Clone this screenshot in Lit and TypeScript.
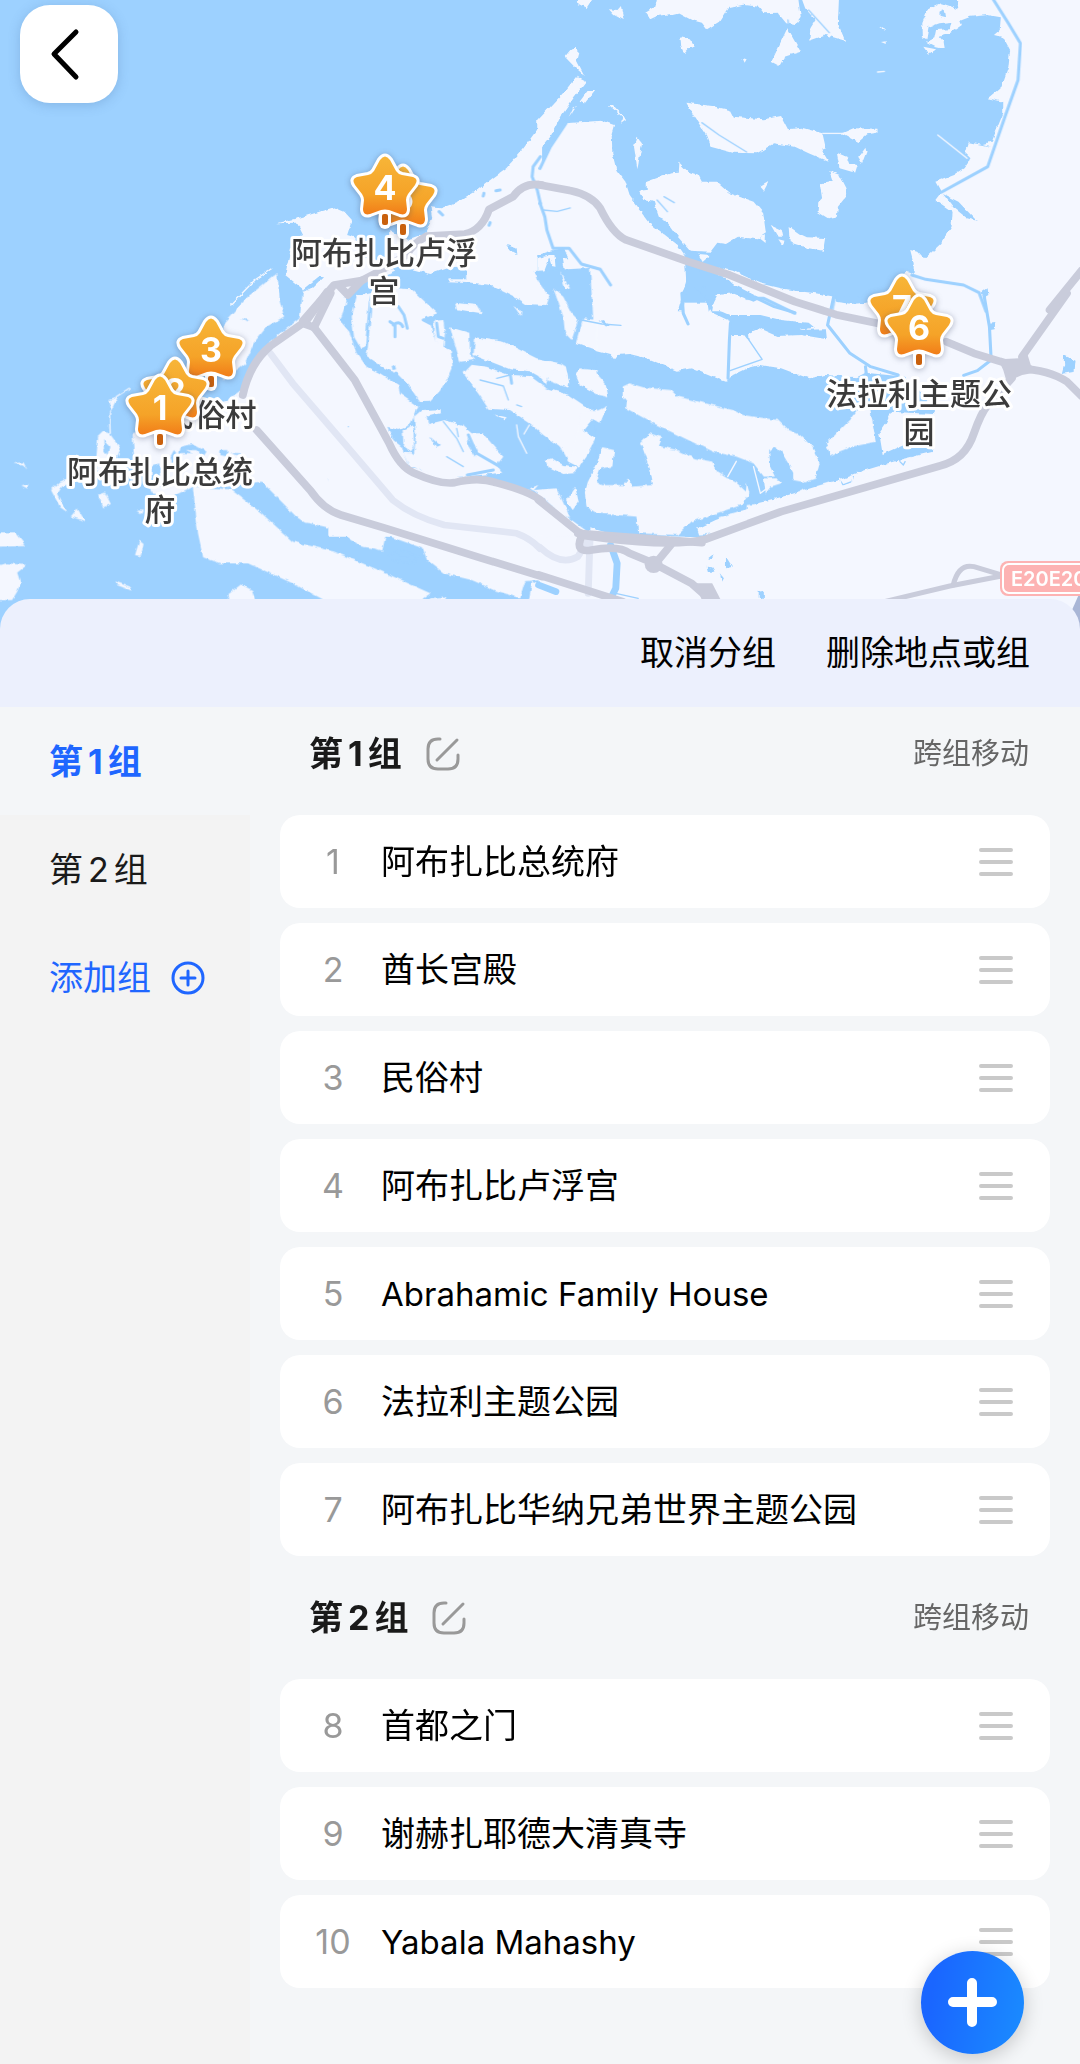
import { LitElement, html, svg, css } from "lit";
import { customElement, property, state } from "lit/decorators.js";

interface Place {
  id: number;
  name: string;
}

interface Group {
  index: number;
  places: Place[];
}

interface Pin {
  n: number;
  x: number;
  y: number;
}

interface PinLabel {
  x: number;
  y: number;
  lines: string[];
}

const GROUPS: Group[] = [
  {
    index: 1,
    places: [
      { id: 1, name: "阿布扎比总统府" },
      { id: 2, name: "酋长宫殿" },
      { id: 3, name: "民俗村" },
      { id: 4, name: "阿布扎比卢浮宫" },
      { id: 5, name: "Abrahamic Family House" },
      { id: 6, name: "法拉利主题公园" },
      { id: 7, name: "阿布扎比华纳兄弟世界主题公园" },
    ],
  },
  {
    index: 2,
    places: [
      { id: 8, name: "首都之门" },
      { id: 9, name: "谢赫扎耶德大清真寺" },
      { id: 10, name: "Yabala Mahashy" },
    ],
  },
];

const PINS: Pin[] = [
  { n: 5, x: 403, y: 197 },
  { n: 4, x: 385, y: 187 },
  { n: 3, x: 211, y: 349 },
  { n: 2, x: 175, y: 390 },
  { n: 1, x: 160, y: 407 },
  { n: 7, x: 902, y: 307 },
  { n: 6, x: 919, y: 327 },
];

const LABELS: PinLabel[] = [
  { x: 210, y: 426, lines: ["民俗村"] },
  { x: 384, y: 264, lines: ["阿布扎比卢浮", "宫"] },
  { x: 160, y: 483, lines: ["阿布扎比总统", "府"] },
  { x: 919, y: 405, lines: ["法拉利主题公", "园"] },
];

/* The map is drawn in tiles; each tile has its own drawing units. */
const NW_LAND = [
  "1574,370 1548,405 1520,445 1470,505 1430,535 1380,575 1330,605 1280,625 1250,622 1255,655 1235,700 1180,720 1130,690 1130,790 1250,822 1300,805 1355,790 1355,842 1305,842 1352,850 1380,865 1450,890 1530,905 1560,880 1574,770",
  "805,670 880,650 970,622 1000,635 1022,660 1008,705 1030,712 1050,770 1120,785 1150,815 1100,835 1050,860 1000,930 880,930 930,875 900,892 888,882 938,832 925,830 880,868 828,825 850,720 880,705 862,668",
];
const NE_LAND = [
  "110,0 150,0 135,24 112,12", "200,28 225,30 235,18 243,60 215,45",
  "340,-4 750,-4 757,50 740,75 715,70 690,38 650,40 635,20 590,14 545,25 520,65 485,88 470,68 440,60 400,38 385,42 340,48 320,58 306,38 335,20",
  "760,-4 868,-4 865,70 886,122 830,105 782,122 785,85 800,60 770,25",
  "718,85 757,155 710,170 695,198 672,185",
  "408,112 435,118 449,140 430,145 418,160 410,140", "72,170 88,150 100,140 112,155 106,180 130,228 98,198",
  "105,230 134,245 100,290 60,350 30,410 -8,460 -8,362 40,310 75,270",
  "115,305 140,270 160,270 130,310", "83,352 95,325 105,318",
  "200,315 212,315 250,358 235,368 240,352", "280,410 296,430 283,508 273,440",
  "75,370 180,362 215,375 208,400 210,460 222,510 248,545 262,590 320,670 400,735 420,765 425,850 410,880 412,934 -8,934 -8,515 30,440",
  "425,308 500,318 550,330 560,350 650,358 700,348 720,388 760,383 820,400 830,445 818,450 838,485 780,460 740,440 680,430 630,460 560,458 495,440 480,400 445,345",
  "876,400 910,385 980,386 980,398 950,403 925,426", "945,440 948,455 935,490 924,470",
  "862,458 890,470 898,492 922,495 915,518 870,505", "840,513 870,525 890,565 888,590 865,620 862,650 836,655 806,635 808,610 822,595 815,550 850,542",
  "405,488 430,515 460,525 470,545 512,545 550,580 620,605 648,640 656,700 630,718 575,710 540,732 515,728 495,755 435,752 400,710 365,660 345,650 330,605 300,600 288,572 310,570 310,545 350,530 380,520 403,518",
  "640,560 664,545 650,572", "670,675 702,690 706,710 690,710", "692,718 710,722 704,736", "722,678 755,702 775,712 828,714 822,752 780,745 725,727", "636,710 656,706 655,726", "460,762 495,765 472,786",
  "985,82 998,78 1005,90", "990,126 1004,124 1004,132", "588,174 600,178 594,188",
  "1574,-4 1210,-4 1215,28 1190,18 1165,10 1125,30 1110,70 1112,112 1122,118 1128,82 1160,70 1195,66 1190,88 1150,90 1145,115 1125,125 1115,122 1145,138 1175,145 1172,125 1158,108 1192,98 1225,75 1220,62 1250,50 1300,45 1338,52 1335,90 1318,105 1345,112 1365,150 1360,200 1340,260 1300,295 1345,305 1345,340 1325,390 1312,425 1285,432 1310,440 1245,427 1235,460 1250,475 1230,505 1200,525 1148,545 1165,577 1148,600 1198,635 1195,680 1165,730 1115,778 1095,755 1075,750 1085,790 1085,820 1062,812 1030,880 960,905 920,915 860,905 855,890 800,880 740,872 700,865 640,850 560,812 520,803 500,934 1574,934",
  "1113,140 1150,148 1130,164",
];
const NE_WATER = [
  "425,800 540,832 560,852 640,895 620,905 560,880 515,885 500,915 490,935 480,858 462,872 430,850 415,934 400,934 424,845",
  "-8,765 30,752 70,745 100,820 118,860 130,934 -8,934",
  "1170,582 1215,605 1268,662 1240,655 1200,622",
  "1280,880 1300,865 1302,888 1290,895", "1160,35 1172,28 1176,55 1160,50",
];
const NE_ISLETS = ["-8,775 30,765 10,820 -8,840", "66,775 95,775 130,820 120,850 150,934 120,934 100,850 72,810", "55,815 70,840 90,934 70,934 45,870", "24,765 42,765 45,800 34,798"];
const SW_LAND = [
  "655,65 720,-10 805,-80 812,0 825,50 775,80 740,125 712,190 650,240 620,190",
  "880,-30 1000,-30 1010,30 988,55 1025,110 1045,185 1120,235 1212,310 1178,350 1208,372 1170,390 1125,400 1140,430 1170,490 1290,535 1390,512 1455,530 1574,580 1574,840 1525,843 1510,895 1440,872 1370,840 1290,820 1240,780 1228,745 1120,705 1110,752 1085,745 1050,740 1005,708 985,690 900,670 885,668 860,650 830,618 760,545 640,560 560,560 500,590 440,580 430,540 390,480 385,400 540,350 660,300 700,270 735,190 780,130 870,55",
  "560,560 670,568 760,640 850,725 970,755 1100,810 1250,880 1215,905 950,905 850,850 720,790 640,790 590,772 575,700",
  "148,570 175,545 215,528 240,535 180,560 168,580 195,636 175,622", "285,585 305,578 322,612 300,622", "205,650 225,626 248,664", "-4,700 45,700 75,738 -4,740",
  "-4,795 20,790 78,795 50,818 60,850 50,875 35,900 -4,900", "392,765 405,722 417,732 408,768", "332,843 380,862 382,872 340,855", "660,885 700,853 732,870 742,905 670,905",
  "280,470 285,410 300,395 318,400 350,445 330,500 300,540 285,530", "318,300 342,292 322,328", "38,490 68,487 80,510 70,498", "62,556 82,552 80,566",
  "1545,845 1574,855 1574,905 1535,905", "1250,895 1290,890 1300,905 1240,905", "395,632 418,632 412,642",
];
const SW_WATER = [
  "525,440 560,432 600,455 590,470 570,450 540,450 560,462 520,462", "640,450 660,450 660,470 640,465", "665,458 700,460 690,465", "505,450 520,470 500,490 495,470", "952,535 975,550 965,558", "700,55 725,62 715,66",
  "440,500 465,490 470,560 440,550", "300,420 318,440 312,465 302,450",
];
const MID_WATER = "100,30 780,-6 800,300 790,420 800,600 780,790 600,660 440,625 340,630 235,590 130,410 0,220 30,90";
const MID_LAND = [
  "-5,80 50,82 48,100 30,152 58,185 78,245 110,290 150,310 205,345 210,372 265,410 240,465 205,480 172,470 190,510 215,530 235,590 280,600 350,625 440,620 600,668 700,735 780,795 600,800 -5,800",
  "122,70 80,78 65,140 72,200 92,235 105,230 116,100",
  "128,60 200,55 245,58 322,130 275,148 300,160 310,195 330,225 362,240 368,290 355,320 330,362 300,395 270,396 235,345 200,310 165,295 110,258 117,200",
  "312,152 340,150 345,190 340,235 328,230 310,190",
  "360,172 418,188 420,250 435,270 390,275",
  "436,202 520,215 560,235 620,265 690,280 712,310 716,352 690,345 655,322 648,345 625,318 600,304 540,298 430,255",
  "400,310 425,284 470,290 535,314 600,318 650,355 715,374 798,430 760,480 798,505 748,592 715,575 690,530 640,495 600,460 540,420 475,416 450,378",
  "645,570 665,565 700,585 742,590 732,610 700,612 655,590",
  "252,440 275,420 330,418 330,430 290,440 295,462 345,450 400,468 425,490 458,490 520,560 500,585 518,608 440,616 350,628 275,600 250,570 258,500",
  "218,480 250,466 252,530 240,548 220,520", "220,548 245,550 272,575 270,600 235,585",
  "375,98 440,105 455,130 380,118", "550,108 575,122 572,138 560,120",
  "410,-6 608,-6 625,35 658,80 650,105 585,102 560,85 480,45 410,36 355,34 356,28 408,28",
  "670,55 700,80 725,130 745,150 725,210 705,190 700,140", "690,5 720,55 708,60",
  "760,145 800,150 800,240 738,218", "745,300 800,300 800,370 750,345",
  "490,433 530,442 525,448", "600,655 625,645 610,662", "610,660 680,655 720,742 700,735",
];
const MID_LAKES = ["185,288 195,285 198,298 188,300", "300,500 330,525 318,530", "415,500 440,540 435,560 410,520"];
const SE_WATER = [
  "-8,-30 50,-30 60,35 78,60 88,115 95,120 105,100 110,50 122,60 108,105 115,128 150,150 205,165 215,178 225,165 260,162 310,175 345,190 400,212 440,205 500,230 540,245 560,225 600,205 640,195 700,205 780,235 830,225 920,232 945,218 1060,230 1150,335 1140,342 1020,335 1005,370 985,400 995,462 1060,432 1140,442 1138,456 1050,478 930,515 870,540 800,560 700,592 640,605 600,628 560,642 510,660 460,685 500,700 470,712 280,708 200,700 160,688 120,668 75,640 65,600 45,575 -8,560",
  "462,-30 505,25 550,45 640,45 700,60 780,68 796,82 750,90 830,88 833,118 760,105 690,108 650,90 640,84 604,100 606,125 590,105 553,105 550,62 500,38",
  "858,-10 950,-6 948,8 900,12 862,6", "1305,68 1322,66 1320,88 1308,90", "1520,165 1555,182 1552,215 1515,222 1522,195", "170,62 185,60 205,80 190,78",
  "484,800 500,802 508,815 488,815", "540,770 552,790 560,800 540,805", "522,820 534,835 528,846", "488,775 504,762 498,778", "635,875 650,872 650,897 635,893",
];
const SE_LAND = [
  "75,200 85,250 80,262 20,240 60,190", "75,600 102,560 112,605 95,630",
  "120,340 170,330 195,318 175,368 152,358 125,388 154,412 135,470 112,502 90,480",
  "105,225 115,205 155,210 190,250 198,292 170,285 115,250",
  "240,260 260,250 300,262 380,270 400,290 460,305 560,330 590,345 690,360 720,390 755,405 790,440 812,490 800,535 770,547 735,540 735,515 700,455 680,440 665,450 668,500 682,530 650,530 620,490 570,470 500,455 420,415 330,370 250,325 252,305 240,290",
  "290,430 318,400 355,412 345,438 400,450 450,475 500,485 510,510 540,530 570,545 598,572 600,548 608,580 585,615 540,630 440,665 400,705 285,700 280,650 230,645 165,640 135,620 130,580 140,540 165,490 180,442 215,450 210,500 175,505 162,545 180,555 245,555 255,533 270,560 328,555 320,510 300,450",
  "830,432 900,360 920,330 958,322 975,425 900,442 842,466",
  "600,615 625,612 740,582 738,600 640,628 620,655 600,640", "518,652 590,630 595,645 525,665", "742,578 775,565 780,585 760,600", "800,560 850,545 848,565 805,580",
  "456,685 540,672 620,655 600,668 490,702 462,704", "920,522 960,512 960,520 920,530", "968,510 990,504 990,512 968,518", "1000,495 1026,486 1026,494 1000,502", "1070,485 1080,474 1106,472 1100,485",
  "650,535 690,535 700,550 670,560 655,580", "1110,475 1132,462 1150,488 1060,512 900,560 920,545",
];

const STAR =
  "M-5 -27Q0 -34 5 -27L11 -16Q13 -13 17 -12L28 -10Q34 -8 30 -2L23 7Q21 10 21 13L22 22Q22 29 15 27L4 23Q0 22 -4 23L-15 27Q-22 29 -22 22L-21 13Q-21 10 -23 7L-30 -2Q-34 -8 -28 -10L-17 -12Q-13 -13 -11 -16Z";

const rgn = (pts: string[], cls: string) => pts.map((p) => svg`<polygon class=${cls} points=${p}></polygon>`);
const lines = (paths: string[], cls: string) => paths.map((d) => svg`<path class=${cls} d=${d}></path>`);

@customElement("trip-map")
export class TripMap extends LitElement {
  static styles = css`
    :host { display: block; }
    svg { display: block; width: 100%; height: auto; background: #9dd1ff; }
    .land { fill: #f4f7ff; }
    .water { fill: #9dd1ff; }
    path { fill: none; stroke-linecap: round; stroke-linejoin: round; }
    .canal { stroke: #9dd1ff; stroke-width: 9; }
    .creek { stroke: #9dd1ff; stroke-width: 4; }
    .spit { stroke: #f4f7ff; stroke-width: 4; }
    .river { stroke: #9dd1ff; stroke-width: 20; }
    .minor { stroke: #e1e6f4; stroke-width: 20; }
    .road { stroke: #c9ccdb; stroke-width: 23; }
    .ramp { stroke: #c9ccdb; stroke-width: 15; }
    .hub { fill: #c9ccdb; }
    .dark { fill: #a9b6d6; }
    .label {
      font: 500 31px "Noto Sans CJK SC", sans-serif; fill: #3b3b3b; text-anchor: middle;
      stroke: #fff; stroke-width: 6; stroke-linejoin: round; paint-order: stroke;
    }
    .digit { font: 700 34px Inter, sans-serif; fill: #fff; text-anchor: middle; }
    .halo { fill: #fff; stroke: #fff; stroke-width: 6; }
    .star { fill: url(#gold); }
    .pin { filter: drop-shadow(0 1px 3px rgba(60, 70, 100, 0.4)); }
    .sign { fill: #fdb3b3; stroke: #fff; stroke-width: 2; }
    .sign-rim { fill: #fdb3b3; }
    .sign-text { font: 600 20px Inter, sans-serif; fill: #fff; }
  `;

  private pin(p: Pin) {
    return svg`<g class="pin" transform="translate(${p.x} ${p.y})">
      <rect x="-6" y="20" width="12" height="22" rx="6" fill="#fff"></rect>
      <path class="halo" d=${STAR}></path>
      <rect x="-3" y="27" width="6" height="11" rx="2" fill="#c9600c"></rect>
      <path class="star" d=${STAR}></path>
      <text class="digit" x="0" y="13">${p.n}</text>
    </g>`;
  }

  render() {
    return html`<svg viewBox="0 0 1080 640" role="img" aria-label="地图">
      <defs>
        <linearGradient id="gold" gradientUnits="userSpaceOnUse" x1="0" y1="-30" x2="0" y2="28">
          <stop offset="0" stop-color="#f7b538"></stop>
          <stop offset="0.65" stop-color="#f5a328"></stop>
          <stop offset="1" stop-color="#f17c18"></stop>
        </linearGradient>
        <filter id="coast" x="0" y="0" width="1080" height="640" filterUnits="userSpaceOnUse" color-interpolation-filters="sRGB">
          <feTurbulence type="fractalNoise" baseFrequency="0.16" numOctaves="2" seed="4" result="n"></feTurbulence>
          <feDisplacementMap in="SourceGraphic" in2="n" scale="4" xChannelSelector="R" yChannelSelector="G"></feDisplacementMap>
        </filter>
      </defs>

      <g filter="url(#coast)">
        <g transform="scale(.3444 .3333)">
          ${rgn(NW_LAND, "land")}
          ${lines(["M670 915L740 840L790 805"], "spit")}
          <polygon class="water" points="1470,735 1500,745 1502,765 1485,755"></polygon>
        </g>
        <g transform="translate(0 300) scale(.3444 .3333)">
          ${rgn(SW_LAND, "land")}${rgn(SW_WATER, "water")}
          ${lines(["M375 265L338 290L318 340L320 400"], "spit")}
          ${lines(["M1130 765L1165 750L1215 770L1200 790L1140 780", "M1160 765L1190 765L1190 780"], "creek")}
        </g>
        <g transform="translate(540 300) scale(.3444 .3333)">
          <rect class="land" x="-4" y="8" width="1580" height="1000"></rect>
          ${rgn(SE_WATER, "water")}
        </g>
        <g transform="translate(540 0) scale(.3444 .3333)">
          ${rgn(NE_LAND, "land")}${rgn(NE_WATER, "water")}${rgn(NE_ISLETS, "land")}
        </g>
        <g transform="translate(330 270) scale(.3333)">
          <polygon class="water" points=${MID_WATER}></polygon>
          ${rgn(MID_LAND, "land")}${rgn(MID_LAKES, "water")}
        </g>
        <g transform="translate(540 300) scale(.3444 .3333)">${rgn(SE_LAND, "land")}</g>
      </g>

      <g transform="scale(.3444 .3333)">
        ${lines(["M1569 470L1548 500L1545 530L1560 570L1569 610", "M1275 635L1285 645", "M1405 580L1403 588", "M1440 572L1452 570", "M1423 668L1420 676"], "canal")}
      </g>
      <g transform="translate(540 0) scale(.3444 .3333)">
        ${lines(["M820 400L880 400", "M1155 405L1240 475", "M980 216L1000 214"], "spit")}
        ${lines(["M1315 -4L1360 70L1395 130L1388 240L1350 350L1300 500L1165 577", "M75 370L30 440L0 505", "M0 610L14 650L20 690L38 745L85 745L120 792L175 808L205 855", "M1080 825L1120 838L1230 855L1275 878L1295 934", "M600 895L650 895L740 940"], "canal")}
        ${lines(["M10 630L50 634L88 624", "M470 368L520 405L600 456", "M720 60L722 80", "M780 30L840 98", "M340 600L370 635M360 590L390 608", "M858 890L850 934"], "creek")}
      </g>
      <g transform="translate(330 270) scale(.3333)">
        ${lines(["M205 110L222 135L232 175M180 155L195 165L195 200M190 165Q210 150 218 170", "M280 150L300 160", "M540 308L545 340", "M320 160L325 200L340 205", "M415 495L440 550L510 590", "M412 615L490 600"], "canal")}
        ${lines(["M450 330L520 348L535 390M500 325L540 315", "M340 455L380 505L400 545M380 475L385 500", "M350 560L400 590", "M55 470L55 470", "M655 530L690 575", "M560 405L575 410"], "creek")}
        ${lines(["M560 465L565 500L590 550", "M598 465L582 492"], "spit")}
      </g>
      <g transform="translate(540 300) scale(.3444 .3333)">
        ${lines(["M553 70L550 120L546 235", "M412 -20L416 40L430 72", "M600 -20L680 20L740 38", "M855 -20L835 75L900 160L960 200L1040 225", "M1290 -10L1305 80L1310 180L1270 212L1230 226", "M945 200L948 225", "M970 320L985 350"], "canal")}
        ${lines(["M120 60L180 72L235 76", "M600 110L645 178L552 212", "M870 540L880 555L905 545L910 530", "M1045 485L1055 495L1060 485", "M220 880L285 895"], "creek")}
        ${lines(["M545 530L570 484", "M620 500L640 580L665 560", "M250 710L420 712", "M870 535L875 560L905 552L908 532"], "spit")}
        ${lines(["M205 735L224 790L220 865L208 890", "M-4 855L46 875"], "river")}
      </g>

      <g transform="translate(0 300) scale(.3444 .3333)">
        ${lines(["M785 160L850 250L1000 430L1140 600Q1200 650 1290 675L1500 700Q1540 715 1568 746"], "minor")}
        ${lines(["M705 285Q725 190 785 138L890 62L950 -24", "M745 390L900 570Q940 630 990 645L1120 685L1400 775L1574 830", "M880 70L912 82L960 -20", "M910 80L1030 240L1130 430Q1160 500 1200 518Q1280 555 1320 548Q1390 530 1440 548Q1540 575 1574 604"], "road")}
      </g>
      <g transform="translate(540 300) scale(.3444 .3333)">
        ${lines(["M0 742Q60 800 110 770L140 720", "M145 720L140 880"], "minor")}
        ${lines(["M-4 600L110 695L130 705", "M110 700L470 728", "M120 710Q100 760 150 750Q230 735 260 760L330 790L440 850L500 905", "M340 785L380 735", "M-4 825L240 905", "M1180 125L1260 160L1370 195", "M1400 170L1530 -20", "M1390 205Q1480 210 1530 245L1574 290", "M1370 235L1300 315Q1280 340 1260 400Q1235 480 1160 498L700 635L480 718Q380 745 120 706"], "road")}
        ${lines(["M1000 905L1190 858L1340 828", "M1200 855Q1215 790 1260 800L1340 825"], "ramp")}
        <polygon class="hub" points="1330,178 1390,175 1410,145 1425,195 1450,215 1400,225 1355,245 1345,210"></polygon>
        <polygon class="hub" points="450,850 500,850 525,900 470,900"></polygon>
        <circle class="hub" cx="330" cy="793" r="26"></circle>
      </g>
      <g transform="scale(.3444 .3333)">
        ${lines(["M1574 555Q1520 545 1490 590L1420 628Q1400 690 1350 702L1240 708Q1200 730 1180 765L1100 815L1050 842L970 855L880 962", "M1050 842L1010 885L985 858"], "road")}
      </g>
      <g transform="translate(540 0) scale(.3444 .3333)">
        ${lines(["M-4 554L90 572Q150 585 175 625Q210 700 250 720L430 785L550 825L740 905L860 944L990 972", "M1480 930L1574 810"], "road")}
      </g>
      <polygon class="dark" points="1080,592 1072,610 1082,640"></polygon>

      <rect class="sign-rim" x="1000" y="561" width="100" height="35" rx="8"></rect>
      <rect class="sign" x="1003" y="564" width="100" height="29" rx="6"></rect>
      <text class="sign-text" x="1011" y="586">E20E20</text>

      ${LABELS.map((l) => l.lines.map((t, i) => svg`<text class="label" x=${l.x} y=${l.y + i * 38}>${t}</text>`))}
      ${PINS.map((p) => this.pin(p))}
    </svg>`;
  }
}

@customElement("place-group")
export class PlaceGroup extends LitElement {
  @property({ attribute: false }) group!: Group;

  static styles = css`
    :host { display: flex; flex-direction: column; gap: 15px; }
    button { border: 0; padding: 0; background: none; font: inherit; color: inherit; display: flex; }
    header { display: flex; align-items: center; height: 93px; padding: 0 21px 0 29px; }
    h2 { margin: 0 24px 0 0; font-size: 34px; line-height: 48px; font-weight: 700; color: #1a1a1a; }
    .num { margin: 0 5px; }
    .edit svg { width: 34px; height: 34px; }
    .move { margin-left: auto; font-size: 29px; line-height: 40px; color: #666; }
    ul { list-style: none; margin: 0; padding: 0; display: flex; flex-direction: column; gap: 15px; }
    li { display: flex; align-items: center; gap: 18px; height: 93px; padding: 0 37px 0 23px; border-radius: 20px; background: #fff; }
    .order { width: 60px; text-align: center; font-size: 34px; color: #999; }
    .name { flex: 1; font-size: 34px; line-height: 48px; color: #000; }
    .latin { font-size: 33px; }
    .grip svg { width: 34px; height: 30px; }
  `;

  render() {
    return html`
      <header>
        <h2>第<span class="num">${this.group.index}</span>组</h2>
        <button class="edit" aria-label="编辑组名">
          <svg viewBox="0 0 34 34" fill="none" stroke="#999" stroke-width="3" stroke-linecap="round">
            <path d="M14 2H12Q2 2 2 12V22Q2 32 12 32H22Q32 32 32 22V18"></path>
            <path d="M11 23L31 3"></path>
          </svg>
        </button>
        <button class="move">跨组移动</button>
      </header>
      <ul>
        ${this.group.places.map(
          (p) => html`<li>
            <span class="order">${p.id}</span>
            <span class="name ${/^[A-Za-z ]+$/.test(p.name) ? "latin" : ""}">${p.name}</span>
            <button class="grip" aria-label="拖动排序">
              <svg viewBox="0 0 34 30" stroke="#c9c9c9" stroke-width="4" stroke-linecap="round">
                <path d="M2 3H32M2 15H32M2 27H32"></path>
              </svg>
            </button>
          </li>`
        )}
      </ul>
    `;
  }
}

@customElement("app-root")
export class AppRoot extends LitElement {
  @state() private active = 1;

  static styles = css`
    :host {
      display: flex; flex-direction: column; position: relative; min-height: 100vh;
      background: #f4f6f8; font-family: Inter, "Noto Sans CJK SC", sans-serif;
    }
    button { border: 0; padding: 0; background: none; font: inherit; color: inherit; }
    .back {
      position: absolute; left: 20px; top: 5px; width: 98px; height: 98px; border-radius: 30px;
      background: #fff; box-shadow: 0 2px 12px rgba(60, 100, 150, 0.25);
    }
    .back svg { display: block; width: 98px; height: 98px; }
    .sheet { position: relative; flex: 1; display: flex; flex-direction: column; margin-top: -41px; }
    .bar {
      display: flex; justify-content: flex-end; align-items: center; gap: 50px; height: 108px;
      padding: 0 50px; border-radius: 30px 30px 0 0; background: #ecf0fd;
      font-size: 34px; line-height: 48px; color: #000;
    }
    .body { flex: 1; display: flex; background: #f4f6f8; }
    nav { flex: none; width: 250px; display: flex; flex-direction: column; background: #f3f3f3; }
    .tab {
      display: flex; align-items: center; height: 108px; padding: 2px 0 0 49px;
      font-size: 34px; line-height: 48px; color: #1a1a1a; box-sizing: border-box;
    }
    .tab.on { background: #f4f6f8; color: #1f66ff; font-weight: 700; }
    .tab.add { color: #1f66ff; gap: 20px; }
    .tab.add svg { width: 34px; height: 34px; }
    .num { margin: 0 5px; }
    main { flex: 1; display: flex; flex-direction: column; gap: 15px; padding: 0 30px 76px; }
    .fab {
      position: absolute; right: 56px; bottom: 10px; width: 103px; height: 103px; border-radius: 50%;
      background: linear-gradient(100deg, #1a66ff 15%, #1a88ff 90%); box-shadow: 0 4px 20px rgba(0, 0, 0, 0.2);
    }
    .fab svg { display: block; width: 103px; height: 103px; }
  `;

  render() {
    return html`
      <trip-map></trip-map>
      <button class="back" aria-label="返回">
        <svg viewBox="0 0 98 98" fill="none" stroke="#000" stroke-width="5" stroke-linecap="round" stroke-linejoin="round">
          <path d="M56 27L34 49L56 72"></path>
        </svg>
      </button>
      <section class="sheet">
        <div class="bar">
          <button>取消分组</button>
          <button>删除地点或组</button>
        </div>
        <div class="body">
          <nav>
            ${GROUPS.map(
              (g) => html`<button class="tab ${g.index === this.active ? "on" : ""}" @click=${() => (this.active = g.index)}>
                <span>第<span class="num">${g.index}</span>组</span>
              </button>`
            )}
            <button class="tab add">
              添加组
              <svg viewBox="0 0 34 34" fill="none" stroke="#1f66ff" stroke-width="3" stroke-linecap="round">
                <circle cx="17" cy="17" r="15"></circle>
                <path d="M10 17H24M17 10V24"></path>
              </svg>
            </button>
          </nav>
          <main>${GROUPS.map((g) => html`<place-group .group=${g}></place-group>`)}</main>
        </div>
      </section>
      <button class="fab" aria-label="添加地点">
        <svg viewBox="0 0 103 103" stroke="#fff" stroke-width="10" stroke-linecap="round">
          <path d="M32 51H71M51 32V71"></path>
        </svg>
      </button>
    `;
  }
}
